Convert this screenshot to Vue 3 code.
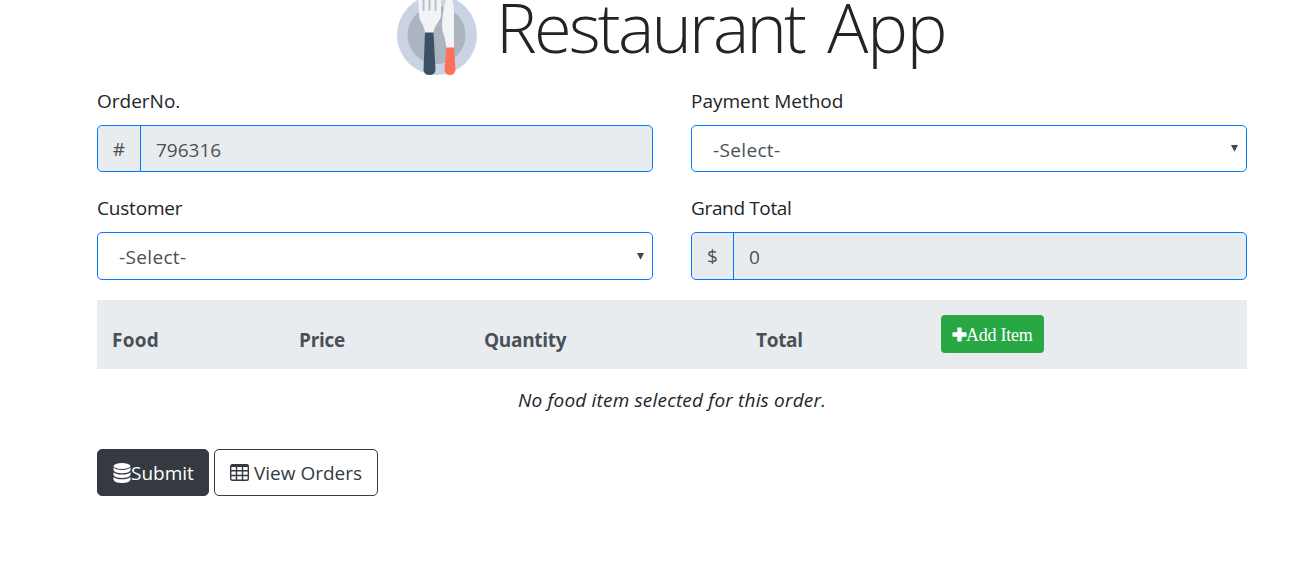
<script setup>
import { ref } from 'vue'

const orderNo = ref('796316')
const grandTotal = ref('0')
</script>

<template>
  <div class="page">
    <header class="title">
      <svg class="logo" width="80" height="80" viewBox="0 0 80 80">
        <circle cx="40" cy="40" r="40" fill="#c9d3e3" />
        <circle cx="39.500" cy="40" r="29" fill="#abb4c0" />
        <path d="M21 0H44V20C44 26 37 30 36.500 38H28C27.500 30 22 26 22 20Z" fill="#f2f3f5" />
        <path d="M26.500 0V15M32.500 0V15M38.500 0V15" stroke="#b8c0cc" stroke-width="2" stroke-linecap="round" />
        <path d="M28 37.500H36.500L38.500 75Q38 80 32.500 80Q27 80 26.500 75Z" fill="#3b5266" />
        <path d="M51 0Q57 4 57 16V53H49.500Q48 42 45.500 36Q44 24 48 8Q49 3 51 0Z" fill="#f2f3f5" />
        <path d="M49.500 52.500H57L58.500 75Q58 80 53 80Q48 80 47.500 75Z" fill="#ff7058" />
      </svg>
      <h1>Restaurant <span>App</span></h1>
    </header>

    <form class="form">
      <div class="group">
        <label>OrderNo.</label>
        <div class="field filled">
          <span class="prefix hash">#</span>
          <span class="value">{{ orderNo }}</span>
        </div>
      </div>
      <div class="group">
        <label>Payment Method</label>
        <div class="field select">
          <span class="option">-Select-</span>
          <svg width="7" height="7" viewBox="0 0 7 7"><path d="M0 0H7L3.500 6.700Z" fill="#41474d" /></svg>
        </div>
      </div>
      <div class="group tall">
        <label class="customer">Customer</label>
        <div class="field select">
          <span class="option">-Select-</span>
          <svg width="7" height="7" viewBox="0 0 7 7"><path d="M0 0H7L3.500 6.700Z" fill="#41474d" /></svg>
        </div>
      </div>
      <div class="group tall">
        <label class="grand">Grand Total</label>
        <div class="field filled">
          <span class="prefix dollar">$</span>
          <span class="value">{{ grandTotal }}</span>
        </div>
      </div>
    </form>

    <div class="items-head">
      <span class="food">Food</span>
      <span>Price</span>
      <span>Quantity</span>
      <span>Total</span>
      <button class="add" type="button">
        <svg width="15" height="15" viewBox="0 0 15 15"><path d="M5.300 1.200Q5.300 .4 6.100 .4H8.900Q9.700 .4 9.700 1.200V5.300H13.800Q14.600 5.300 14.600 6.100V8.900Q14.600 9.700 13.800 9.700H9.700V13.800Q9.700 14.600 8.900 14.600H6.100Q5.300 14.600 5.300 13.800V9.700H1.200Q.4 9.700 .4 8.900V6.100Q.4 5.300 1.200 5.300H5.300Z" fill="#fff" /></svg>
        <span>Add Item</span>
      </button>
    </div>
    <p class="empty"><em>No food item selected for this order.</em></p>

    <div class="actions">
      <button class="btn dark" type="button">
        <svg width="18" height="20" viewBox="0 0 19 20" preserveAspectRatio="none" fill="#fff">
          <ellipse cx="9.500" cy="3" rx="9" ry="3" />
          <path d="M.5 4.600Q3 7 9.500 7T18.500 4.600V7.200Q17 10.200 9.500 10.200T.5 7.200Z" />
          <path d="M.5 9.300Q3 11.600 9.500 11.600T18.500 9.300V11.900Q17 14.900 9.500 14.900T.5 11.900Z" />
          <path d="M.5 14Q3 16.300 9.500 16.300T18.500 14V16.800Q17 20 9.500 20T.5 16.800Z" />
        </svg>
        <span>Submit</span>
      </button>
      <button class="btn light" type="button">
        <svg width="19" height="17" viewBox="0 0 19 17" fill="none" stroke="#343a40" stroke-width="1.400">
          <rect x=".7" y=".7" width="17.600" height="15.600" rx="1.500" />
          <path d="M1 2H18" stroke-width="2" />
          <path d="M1 6.700H18M1 11.500H18M6.500 2V16M12.500 2V16" />
        </svg>
        <span>View Orders</span>
      </button>
    </div>
  </div>
</template>

<style>
body {
  margin: 0;
  background: #fff;
}
</style>

<style scoped>
.page {
  box-sizing: border-box;
  width: 1314px;
  height: 570px;
  padding: 0 67px 0 97px;
  color: #212529;
  font-family: "Open Sans", "Noto Sans", sans-serif;
  font-size: 19px;
  line-height: 30px;
}
svg {
  flex: none;
}
.title {
  display: flex;
  height: 85px;
  padding-left: 300px;
}
.logo {
  margin: -5px 19px 0 0;
}
h1 {
  margin: 0;
  font-size: 68.500px;
  font-weight: 300;
  line-height: 53px;
  letter-spacing: -2.800px;
  white-space: nowrap;
}
h1 span {
  margin-left: 8px;
  letter-spacing: -1.200px;
}
.form {
  display: grid;
  grid-template-columns: 556px 556px;
  column-gap: 38px;
}
.group {
  display: flex;
  flex-direction: column;
  height: 107px;
}
label {
  height: 40px;
  line-height: 32px;
}
.customer {
  letter-spacing: -0.200px;
}
.grand {
  letter-spacing: -0.350px;
}
.field {
  box-sizing: border-box;
  display: flex;
  align-items: center;
  height: 47px;
  border: 1px solid #007bff;
  border-radius: 5px;
  color: #495057;
  overflow: hidden;
}
.tall {
  height: 108px;
}
.tall .field {
  height: 48px;
}
.filled {
  background: #e9ecef;
}
.prefix {
  box-sizing: border-box;
  display: flex;
  align-items: center;
  justify-content: center;
  height: 100%;
  border-right: 1px solid #007bff;
}
.hash {
  width: 43px;
}
.dollar {
  width: 42px;
}
.value {
  margin: 2px 0 0 15px;
}
.select {
  justify-content: space-between;
  padding: 0 8px 0 21px;
}
.option {
  padding-top: 2px;
  letter-spacing: 0.350px;
}
.items-head {
  box-sizing: border-box;
  display: grid;
  grid-template-columns: 187px 185px 272px 185px 1fr;
  height: 69px;
  padding: 15px;
  background: #e9ecef;
  color: #495057;
  font-weight: 700;
}
.items-head > span {
  padding-top: 10px;
  letter-spacing: -0.300px;
}
.items-head > .food {
  letter-spacing: 0.250px;
}
.add {
  display: flex;
  align-items: center;
  box-sizing: border-box;
  width: 103px;
  height: 38px;
  padding: 0 11px;
  border: 0;
  border-radius: 4px;
  background: #28a745;
  color: #fff;
  font: 18px/26px "Liberation Serif", serif;
  letter-spacing: -0.250px;
  white-space: nowrap;
}
.add span {
  margin-left: -1px;
  padding-top: 2px;
}
.empty {
  margin: 16px 0 34px;
  text-align: center;
  letter-spacing: 0.180px;
}
.actions {
  display: flex;
  gap: 5px;
}
.btn {
  display: flex;
  align-items: center;
  box-sizing: border-box;
  height: 47px;
  padding: 0 15px;
  border: 1px solid #343a40;
  border-radius: 5px;
  font: inherit;
  white-space: nowrap;
}
.dark {
  width: 112px;
  background: #343a40;
  color: #fff;
}
.light {
  width: 164px;
  gap: 5px;
  background: #fff;
  color: #343a40;
}
</style>
